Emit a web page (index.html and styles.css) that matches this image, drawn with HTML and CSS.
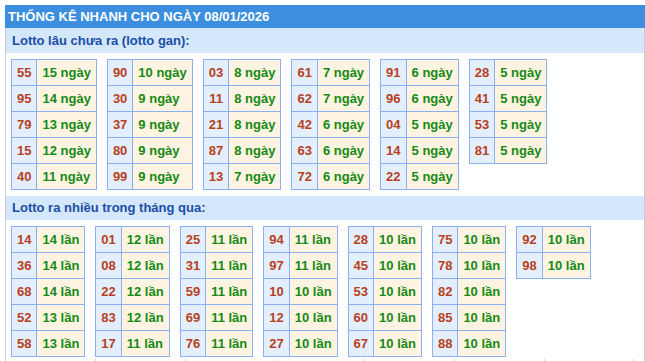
FILE: index.html
```html
<!DOCTYPE html>
<html lang="vi">
<head>
<meta charset="utf-8">
<title>Thống kê nhanh</title>
<link rel="stylesheet" href="styles.css">
</head>
<body>
<div class="wrap">
  <div class="title">THỐNG KÊ NHANH CHO NGÀY 08/01/2026</div>
  <div class="sub">Lotto lâu chưa ra (lotto gan):</div>
  <div class="group">
    <table class="t"><tr><td class="n">55</td><td class="v">15 ngày</td></tr><tr><td class="n">95</td><td class="v">14 ngày</td></tr><tr><td class="n">79</td><td class="v">13 ngày</td></tr><tr><td class="n">15</td><td class="v">12 ngày</td></tr><tr><td class="n">40</td><td class="v">11 ngày</td></tr></table>
    <table class="t"><tr><td class="n">90</td><td class="v">10 ngày</td></tr><tr><td class="n">30</td><td class="v">9 ngày</td></tr><tr><td class="n">37</td><td class="v">9 ngày</td></tr><tr><td class="n">80</td><td class="v">9 ngày</td></tr><tr><td class="n">99</td><td class="v">9 ngày</td></tr></table>
    <table class="t"><tr><td class="n">03</td><td class="v">8 ngày</td></tr><tr><td class="n">11</td><td class="v">8 ngày</td></tr><tr><td class="n">21</td><td class="v">8 ngày</td></tr><tr><td class="n">87</td><td class="v">8 ngày</td></tr><tr><td class="n">13</td><td class="v">7 ngày</td></tr></table>
    <table class="t"><tr><td class="n">61</td><td class="v">7 ngày</td></tr><tr><td class="n">62</td><td class="v">7 ngày</td></tr><tr><td class="n">42</td><td class="v">6 ngày</td></tr><tr><td class="n">63</td><td class="v">6 ngày</td></tr><tr><td class="n">72</td><td class="v">6 ngày</td></tr></table>
    <table class="t"><tr><td class="n">91</td><td class="v">6 ngày</td></tr><tr><td class="n">96</td><td class="v">6 ngày</td></tr><tr><td class="n">04</td><td class="v">5 ngày</td></tr><tr><td class="n">14</td><td class="v">5 ngày</td></tr><tr><td class="n">22</td><td class="v">5 ngày</td></tr></table>
    <table class="t"><tr><td class="n">28</td><td class="v">5 ngày</td></tr><tr><td class="n">41</td><td class="v">5 ngày</td></tr><tr><td class="n">53</td><td class="v">5 ngày</td></tr><tr><td class="n">81</td><td class="v">5 ngày</td></tr></table>
  </div>
  <div class="sub sub2">Lotto ra nhiều trong tháng qua:</div>
  <div class="group">
    <table class="t"><tr><td class="n">14</td><td class="v">14 lần</td></tr><tr><td class="n">36</td><td class="v">14 lần</td></tr><tr><td class="n">68</td><td class="v">14 lần</td></tr><tr><td class="n">52</td><td class="v">13 lần</td></tr><tr><td class="n">58</td><td class="v">13 lần</td></tr></table>
    <table class="t"><tr><td class="n">01</td><td class="v">12 lần</td></tr><tr><td class="n">08</td><td class="v">12 lần</td></tr><tr><td class="n">22</td><td class="v">12 lần</td></tr><tr><td class="n">83</td><td class="v">12 lần</td></tr><tr><td class="n">17</td><td class="v">11 lần</td></tr></table>
    <table class="t"><tr><td class="n">25</td><td class="v">11 lần</td></tr><tr><td class="n">31</td><td class="v">11 lần</td></tr><tr><td class="n">59</td><td class="v">11 lần</td></tr><tr><td class="n">69</td><td class="v">11 lần</td></tr><tr><td class="n">76</td><td class="v">11 lần</td></tr></table>
    <table class="t"><tr><td class="n">94</td><td class="v">11 lần</td></tr><tr><td class="n">97</td><td class="v">11 lần</td></tr><tr><td class="n">10</td><td class="v">10 lần</td></tr><tr><td class="n">12</td><td class="v">10 lần</td></tr><tr><td class="n">27</td><td class="v">10 lần</td></tr></table>
    <table class="t"><tr><td class="n">28</td><td class="v">10 lần</td></tr><tr><td class="n">45</td><td class="v">10 lần</td></tr><tr><td class="n">53</td><td class="v">10 lần</td></tr><tr><td class="n">60</td><td class="v">10 lần</td></tr><tr><td class="n">67</td><td class="v">10 lần</td></tr></table>
    <table class="t"><tr><td class="n">75</td><td class="v">10 lần</td></tr><tr><td class="n">78</td><td class="v">10 lần</td></tr><tr><td class="n">82</td><td class="v">10 lần</td></tr><tr><td class="n">85</td><td class="v">10 lần</td></tr><tr><td class="n">88</td><td class="v">10 lần</td></tr></table>
    <table class="t"><tr><td class="n">92</td><td class="v">10 lần</td></tr><tr><td class="n">98</td><td class="v">10 lần</td></tr></table>
  </div>
  <div class="next">
    <div class="nc"></div><div class="nc"></div><div class="nc"></div><div class="nc"></div><div class="nc"></div><div class="nc"></div><div class="nc"></div>
  </div>
</div>
</body>
</html>
```

FILE: styles.css
```css
html, body {
  margin: 0;
  padding: 0;
  background: #ffffff;
}
body {
  font-family: "Liberation Sans", Arial, sans-serif;
  padding: 5px 0 0 5px;
}
.wrap {
  width: 638px;
  border-left: 1px solid #c9ccd3;
  border-right: 1px solid #c9ccd3;
}
.title {
  background: #3c8fde;
  color: #ffffff;
  font-weight: bold;
  font-size: 13px;
  height: 23px;
  line-height: 23px;
  padding-left: 3px;
  margin-left: -1px;
  margin-right: -1px;
}
.sub {
  background: #d4e7fb;
  color: #1b4ea6;
  font-weight: bold;
  font-size: 13px;
  height: 25px;
  line-height: 25px;
  padding-left: 6px;
}
.sub2 {
  height: 24px;
  line-height: 24px;
  margin-top: 6px;
}
.group {
  display: flex;
  align-items: flex-start;
  gap: 10px;
  padding: 6px 5px 0;
}
.t {
  border-collapse: collapse;
  font-size: 13px;
  font-weight: bold;
}
.t td {
  border: 1px solid #8cb1f2;
  height: 26px;
  padding: 0 5px;
  box-sizing: border-box;
  line-height: 15px;
  white-space: nowrap;
}
.t td.n {
  background: #e3effd;
  color: #b8401e;
  text-align: center;
}
.t td.v {
  background: #fff3e1;
  color: #158a15;
}
.next {
  display: flex;
  margin-top: 2px;
  height: 6px;
}
.nc {
  width: 89.75px;
  flex: none;
  box-sizing: border-box;
  border-right: 1px solid #d6d8dc;
}
```
